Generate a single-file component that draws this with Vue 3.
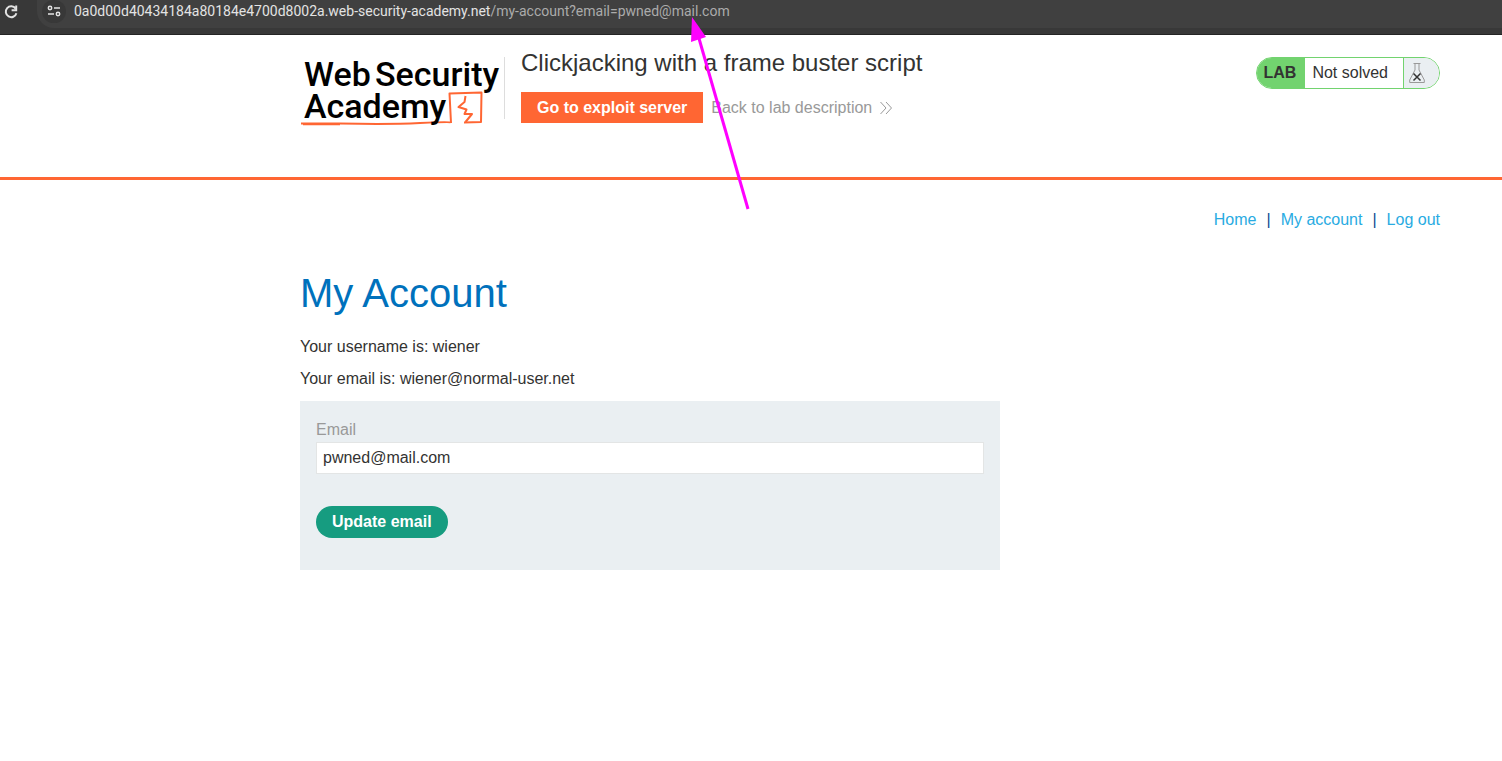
<script setup>
import { ref } from 'vue'

const email = ref('pwned@mail.com')
const links = ['Home', 'My account', 'Log out']
</script>

<template>
  <div class="page">
    <div class="toolbar">
      <button class="reload" type="button" aria-label="Reload">
        <svg width="16" height="16" viewBox="0 0 16 16" fill="none" stroke="#e3e3e3" stroke-width="2">
          <path d="M12.600 4.600A5.400 5.400 0 1 0 13.400 9.200" />
          <path d="M13.200 1.600v4.600H8.600" />
        </svg>
      </button>
      <div class="omnibox">
        <button class="site-info" type="button" aria-label="Site information">
          <svg width="14" height="14" viewBox="0 0 14 14" fill="none" stroke="#e3e3e3" stroke-width="1.5">
            <circle cx="3" cy="4" r="1.7" />
            <path d="M7 4h6M1 10h6" />
            <circle cx="11" cy="10" r="1.7" />
          </svg>
        </button>
        <div class="url"><span>0a0d00d40434184a80184e4700d8002a.web-security-academy.net</span>/my-account?email=pwned@mail.com</div>
      </div>
    </div>

    <header class="lab-header">
      <div class="container header-row">
        <a class="logo" href="#" aria-label="Web Security Academy">
          <svg width="204" height="76" viewBox="0 0 204 76">
            <g fill="none" stroke="#ff6633" stroke-linejoin="round">
              <path d="M1 66.500H40Q90 67.500 120 66T151 65.500" stroke-width="2" />
              <path d="M3 67.500H40" stroke-width="1.500" />
              <path d="M151 66L149.500 36.500L181.500 35.500L181 65L164 65.500" stroke-width="2" />
              <path d="M165.500 39L164.500 45L158.500 50L166.500 52.500L164.500 57H172L165.500 65" stroke-width="2" />
            </g>
            <g class="wordmark">
              <text x="4" y="29">Web</text>
              <text x="75" y="29">Security</text>
              <text x="4" y="61">Academy</text>
            </g>
          </svg>
        </a>
        <div class="title">
          <h2>Clickjacking with a frame buster script</h2>
          <div class="actions">
            <a class="exploit" href="#">Go to exploit server</a>
            <a class="back" href="#">Back to lab description
              <svg width="12" height="14" viewBox="0 0 12 14" fill="none" stroke="#999" stroke-width="1">
                <path d="M.5 1l5.500 6-5.500 6M6 1l5.500 6L6 13" />
              </svg>
            </a>
          </div>
        </div>
        <div class="status">
          <strong>LAB</strong>
          <span class="state">Not solved</span>
          <span class="flask">
            <svg width="16" height="20" viewBox="0 0 16 20" fill="none">
              <path d="M4.500 .5h7M6 1v6L.7 17v2.500h14.600V17L10 7V1" stroke="#999" />
              <path d="M4.500 10.500l7 7m0-7l-7 7" stroke="#333" stroke-width="1.500" />
            </svg>
          </span>
        </div>
      </div>
    </header>

    <main class="container">
      <nav>
        <template v-for="(link, i) in links" :key="link">
          <span v-if="i" class="bar">|</span>
          <a href="#">{{ link }}</a>
        </template>
      </nav>
      <h1>My Account</h1>
      <p>Your username is: wiener</p>
      <p>Your email is: wiener@normal-user.net</p>
      <form @submit.prevent>
        <label for="email">Email</label>
        <input id="email" v-model="email" type="email">
        <button type="submit">Update email</button>
      </form>
    </main>

    <svg class="pointer" width="60" height="196" viewBox="0 0 60 196">
      <path d="M8 18L58 192" stroke="#ff00ff" stroke-width="3" />
      <path d="M2 0L16 20L1 25z" fill="#ff00ff" />
    </svg>
  </div>
</template>

<style>
body {
  margin: 0;
  background: #fff;
}
</style>

<style scoped>
.page {
  position: relative;
  font: 16px/20px "Liberation Sans", Arial, sans-serif;
  color: #333332;
}
a {
  text-decoration: none;
}
svg {
  display: block;
}
.toolbar {
  display: flex;
  height: 34px;
  background: #383838;
  border-bottom: 1px solid #242424;
}
.reload {
  flex: none;
  width: 16px;
  height: 22px;
  margin: 0 18px 0 3px;
  padding: 2px 0 0;
  border: 0;
  background: none;
}
.omnibox {
  flex: 1;
  display: flex;
  height: 28px;
  background: #404040;
  border-radius: 0 0 0 17px;
}
.site-info {
  flex: none;
  display: flex;
  justify-content: center;
  width: 24px;
  height: 23px;
  margin-left: 5px;
  padding: 4px 0 0;
  border: 0;
  border-radius: 12px;
  background: #383838;
}
.url {
  margin-left: 8px;
  font: 14px/22px Roboto, sans-serif;
  color: #ababab;
  white-space: nowrap;
}
.url span {
  color: #e3e3e3;
}
.container {
  margin-left: 300px;
  margin-right: 62px;
}
.lab-header {
  border-bottom: 3px solid #ff6633;
}
.header-row {
  display: flex;
  align-items: flex-start;
  height: 120px;
  padding-top: 22px;
}
.logo {
  flex: none;
  height: 62px;
  border-right: 1px solid #ddd;
}
.logo svg {
  overflow: visible;
}
.wordmark {
  font: 500 34px Roboto, sans-serif;
  fill: #000;
}
.title {
  flex: 1;
  margin-left: 16px;
}
h2 {
  margin: -8px 0 15px;
  font-size: 24px;
  font-weight: 400;
  line-height: 28px;
}
.actions {
  display: flex;
  align-items: center;
  gap: 8px;
}
.exploit {
  padding: 0 16px;
  background: #ff6633;
  color: #fff;
  font-weight: 700;
  line-height: 31px;
}
.back {
  display: flex;
  align-items: center;
  gap: 8px;
  color: #999;
}
.status {
  display: flex;
  height: 30px;
  border: 1px solid #72d36f;
  border-radius: 16px;
  overflow: hidden;
  line-height: 30px;
}
.status strong {
  padding: 0 9px 0 7px;
  background: #72d36f;
}
.state {
  padding: 0 15px 0 7px;
}
.flask {
  box-sizing: border-box;
  width: 36px;
  padding: 5px 0 0 5px;
  border-left: 1px solid #72d36f;
  background: #eaeff2;
}
nav {
  display: flex;
  justify-content: flex-end;
  gap: 10px;
  padding-top: 30px;
}
nav a {
  color: #29abe2;
}
.bar {
  color: #0d4b93;
}
h1 {
  margin: 40px 0 21px;
  font-size: 40px;
  font-weight: 400;
  line-height: 46px;
  color: #0071bc;
}
p {
  margin: 0 0 12px;
}
form {
  box-sizing: border-box;
  display: flex;
  flex-direction: column;
  align-items: flex-start;
  max-width: 700px;
  padding: 19px 16px 32px;
  background: #eaeff2;
}
label {
  color: #999;
  margin-bottom: 2px;
}
input {
  box-sizing: border-box;
  width: 100%;
  height: 32px;
  margin: 0;
  padding: 0 6px;
  border: 1px solid #e3e5e5;
  background: #fff;
  font: inherit;
  color: inherit;
}
form button {
  margin: 32px 0 0;
  padding: 0 16px;
  border: 0;
  border-radius: 16px;
  background: #169c80;
  font: 700 16px/32px "Liberation Sans", Arial, sans-serif;
  color: #fff;
}
.pointer {
  position: absolute;
  left: 690px;
  top: 17px;
  pointer-events: none;
}
</style>
